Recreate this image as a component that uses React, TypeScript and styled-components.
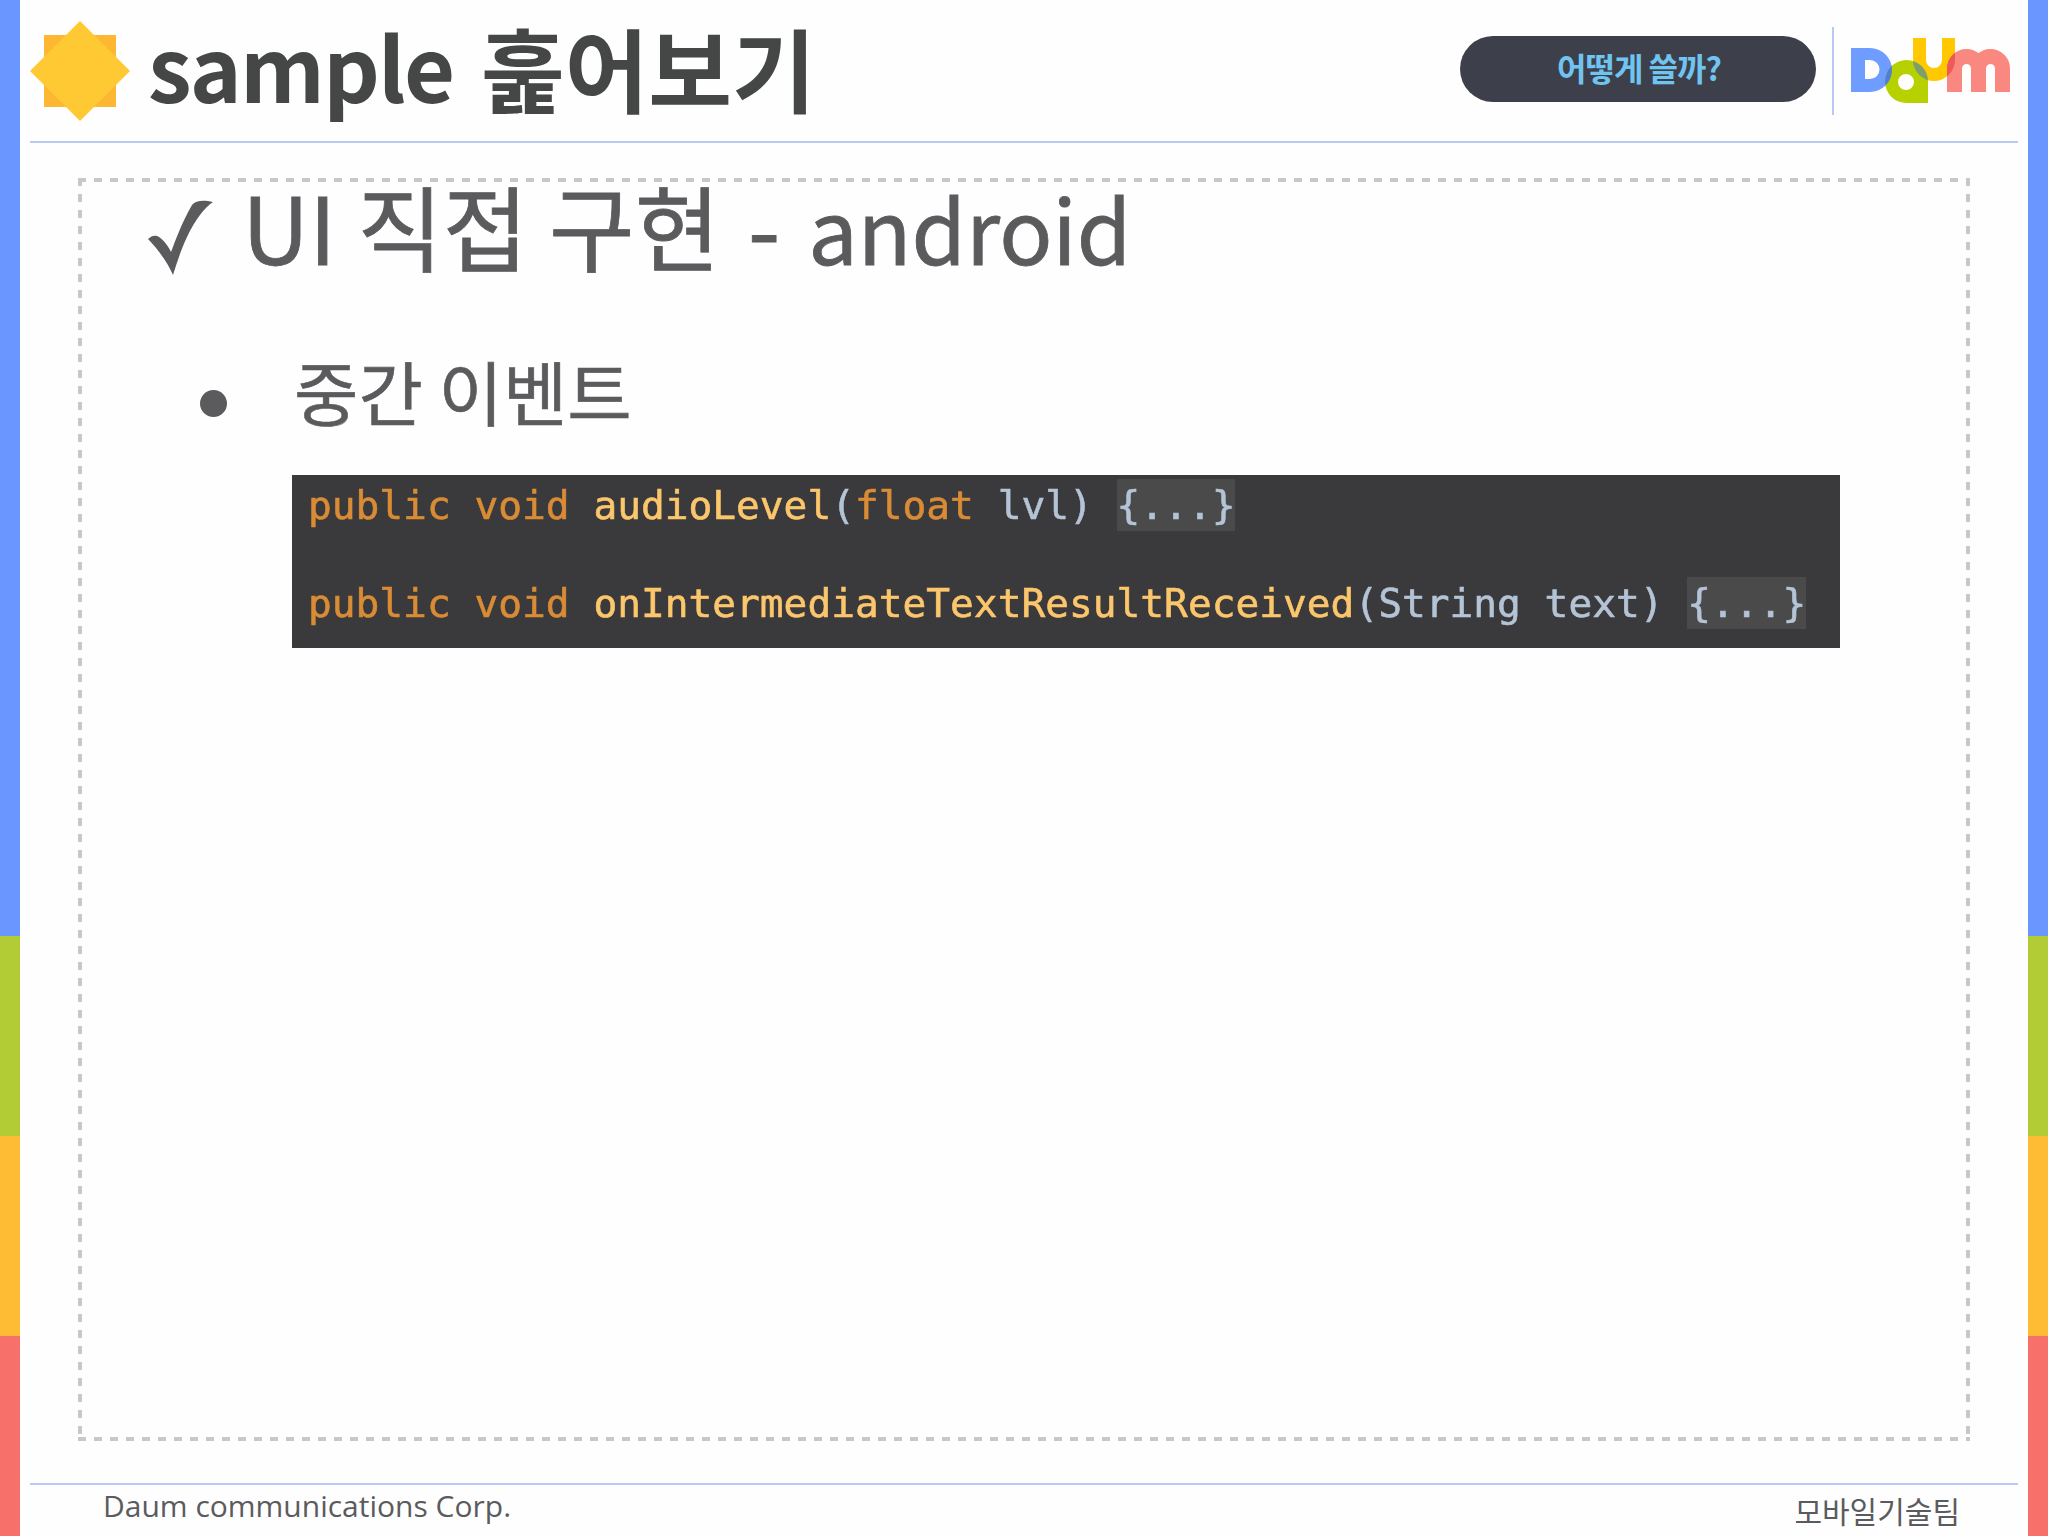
import React from "react";
import styled, { createGlobalStyle } from "styled-components";

const KR = `"Noto Sans CJK KR", "Noto Sans", sans-serif`;
const DASH = "#c8c7c9";

const GlobalStyle = createGlobalStyle`
  html, body {
    margin: 0;
    padding: 0;
    background: #fefefe;
  }
`;

const Slide = styled.div`
  display: grid;
  grid-template-columns: 20px 1fr 20px;
  width: 2048px;
  height: 1536px;
  overflow: hidden;
  font-family: ${KR};
`;

const Strip = styled.div`
  display: flex;
  flex-direction: column;
  height: 100%;
`;

const StripPart = styled.div<{ $color: string; $size: number }>`
  height: ${(p) => p.$size}px;
  background: ${(p) => p.$color};
`;

const Main = styled.main`
  display: flex;
  flex-direction: column;
  padding: 0 10px;
  min-width: 0;
`;

const Header = styled.header`
  display: flex;
  align-items: center;
  height: 141px;
  box-sizing: content-box;
  border-bottom: 2px solid #b8caef;
`;

const Title = styled.h1`
  margin: 0 0 8px 18px;
  font-size: 88px;
  line-height: 1.1;
  font-weight: 700;
  color: #454746;
  white-space: nowrap;
`;

const TitleLatin = styled.span`
  display: inline-block;
  margin-right: 27.5px;
  letter-spacing: -1.75px;
`;

const TitleHangul = styled.span`
  display: inline-block;
  font-size: 91px;
  vertical-align: -3px;
`;

const HelpButton = styled.button`
  margin: 0 0 4px auto;
  width: 356px;
  height: 66px;
  padding: 0 0 4px 2px;
  border: 0;
  border-radius: 33px;
  background: #3d404b;
  color: #6fc4f0;
  font-family: ${KR};
  font-size: 32px;
  font-weight: 700;
  letter-spacing: -1px;
`;

const Divider = styled.div`
  width: 2px;
  height: 88px;
  margin-left: 16px;
  background: #b8caef;
`;

const LogoBox = styled.svg`
  display: block;
  width: 170px;
  height: 75px;
  margin: 0 3px 3px 11px;
`;

const Content = styled.section`
  flex: none;
  box-sizing: border-box;
  height: 1263px;
  margin: 35px 48px 0 48px;
  padding: 3px 66px 0 70px;
  background:
    repeating-linear-gradient(90deg, ${DASH} 0 8px, transparent 8px 16px) top left / 100% 4px no-repeat,
    repeating-linear-gradient(90deg, ${DASH} 0 8px, transparent 8px 16px) bottom left / 100% 4px no-repeat,
    repeating-linear-gradient(180deg, ${DASH} 0 8px, transparent 8px 16px) top left / 4px 100% no-repeat,
    repeating-linear-gradient(180deg, ${DASH} 0 8px, transparent 8px 16px) top right / 4px 100% no-repeat;
`;

const Heading = styled.h2`
  display: flex;
  align-items: flex-start;
  gap: 28px;
  margin: -2px 0 0;
  height: 92px;
  font-size: 93px;
  line-height: 92px;
  font-weight: 400;
  color: #5b5b5e;
  white-space: nowrap;
  -webkit-text-stroke: 0.8px #5b5b5e;
`;

const HeadingDash = styled.span`
  margin: 0 7px;
`;

const HeadingLatin = styled.span`
  font-size: 88px;
`;

const CheckIcon = styled.svg`
  flex: none;
  width: 66px;
  height: 76px;
  margin-top: 21px;
`;

const SubHeading = styled.h3`
  display: flex;
  align-items: center;
  margin: 84px 0 0 49px;
  height: 72px;
  font-size: 70px;
  line-height: 72px;
  font-weight: 400;
  color: #5b5b5e;
  -webkit-text-stroke: 0.6px #5b5b5e;
`;

const Bullet = styled.span`
  flex: none;
  width: 27px;
  height: 27px;
  margin: 24px 67px 0 3px;
  border-radius: 50%;
  background: #5b5b5e;
`;

const CodeBlock = styled.pre`
  box-sizing: border-box;
  width: 1548px;
  height: 173px;
  margin: 48px 0 0 144px;
  padding: 0 0 0 16px;
  background: #3a393b;
  font-family: "DejaVu Sans Mono", "Liberation Mono", monospace;
  font-size: 39.5px;
  line-height: 98px;
  color: #b4c4d6;
  overflow: hidden;
`;

const CodeLine = styled.div`
  height: 98px;
  margin-top: -19px;
  filter: blur(0.7px);
  -webkit-text-stroke: 0.6px currentColor;
  & + & {
    margin-top: 0;
  }
`;

const Keyword = styled.span`
  color: #d98c35;
`;

const Method = styled.span`
  color: #fbc66c;
`;

const Fold = styled.span`
  background: #4a4a4b;
  padding: 3px 0;
`;

const Footer = styled.footer`
  display: flex;
  justify-content: space-between;
  align-items: flex-start;
  margin-top: 42px;
  padding: 0 58px 0 73px;
  border-top: 2px solid #b8caef;
  color: #5b5b5e;
`;

const Company = styled.span`
  font-family: "Open Sans", "Noto Sans", sans-serif;
  font-size: 30px;
  line-height: 41px;
`;

const Team = styled.span`
  font-size: 30px;
  line-height: 50px;
`;

const stripParts = [
  { color: "#6a97ff", size: 936 },
  { color: "#b2cc36", size: 200 },
  { color: "#fdbc34", size: 200 },
  { color: "#f7706a", size: 200 },
];

const SideStrip = () => (
  <Strip>
    {stripParts.map((part) => (
      <StripPart key={part.color} $color={part.color} $size={part.size} />
    ))}
  </Strip>
);

const StarIcon = () => (
  <svg width="100" height="100" viewBox="0 0 100 100" style={{ flex: "none" }}>
    <rect x="14" y="14" width="72" height="72" fill="#fdb733" />
    <polygon points="50,0 100,50 50,100 0,50" fill="#fec933" />
  </svg>
);

const LOGO_D = "M6 16H25A22 22 0 0 1 25 60H6ZM20 28V47H25A9.5 9.5 0 0 0 25 28Z";
const LOGO_U = "M68 6H81V28A8 8 0 0 0 97 28V6H110V28A21 21 0 0 1 68 28Z";
const LOGO_A =
  "M40 49.5A21.5 21.5 0 0 1 83 49.5V71H62A21.5 21.5 0 0 1 40 49.5ZM53 50A8 8 0 0 0 69 50A8 8 0 0 0 53 50Z";
const LOGO_M = "M109.5 60V36.5A12 12 0 0 1 133.5 36.5V60M133.5 36.5A12 12 0 0 1 157.5 36.5V60";

// overlaps of the letters are redrawn clipped, the logo mixes them by hand
const DaumLogo = () => (
  <LogoBox viewBox="0 0 170 75">
    <defs>
      <clipPath id="logo-a">
        <path d={LOGO_A} clipRule="evenodd" />
      </clipPath>
      <clipPath id="logo-u">
        <path d={LOGO_U} />
      </clipPath>
    </defs>
    <path d={LOGO_D} fill="#6e9cff" fillRule="evenodd" />
    <path d={LOGO_U} fill="#ffc800" />
    <path d={LOGO_A} fill="#b6d000" fillRule="evenodd" />
    <path d={LOGO_M} fill="none" stroke="#f98880" strokeWidth="15" />
    <path d={LOGO_D} fill="#4f7fd6" fillRule="evenodd" clipPath="url(#logo-a)" />
    <path d={LOGO_U} fill="#7f9f6a" clipPath="url(#logo-a)" />
    <path d={LOGO_M} fill="none" stroke="#ee5a5a" strokeWidth="15" clipPath="url(#logo-u)" />
  </LogoBox>
);

const CheckMark = () => (
  <CheckIcon viewBox="0 0 66 76">
    <path
      d="M0 39C3 36 6 35 9 36C13 37 20 45 23 52C27 42 33 24 44 5C48 0 56 0 65 2C57 7 47 20 39 37C33 50 29 62 25 75C20 63 9 48 0 39Z"
      fill="#5b5b5e"
    />
  </CheckIcon>
);

export default function App() {
  return (
    <>
      <GlobalStyle />
      <Slide>
        <SideStrip />
        <Main>
          <Header>
            <StarIcon />
            <Title>
              <TitleLatin>sample</TitleLatin>
              <TitleHangul>훑어보기</TitleHangul>
            </Title>
            <HelpButton>어떻게 쓸까?</HelpButton>
            <Divider />
            <DaumLogo />
          </Header>
          <Content>
            <Heading>
              <CheckMark />
              <span>
                UI 직접 구현 <HeadingDash>-</HeadingDash> <HeadingLatin>android</HeadingLatin>
              </span>
            </Heading>
            <SubHeading>
              <Bullet />
              중간 이벤트
            </SubHeading>
            <CodeBlock>
              <CodeLine>
                <Keyword>public void </Keyword>
                <Method>audioLevel</Method>(<Keyword>float </Keyword>lvl) <Fold>{"{...}"}</Fold>
              </CodeLine>
              <CodeLine>
                <Keyword>public void </Keyword>
                <Method>onIntermediateTextResultReceived</Method>(String text) <Fold>{"{...}"}</Fold>
              </CodeLine>
            </CodeBlock>
          </Content>
          <Footer>
            <Company>Daum communications Corp.</Company>
            <Team>모바일기술팀</Team>
          </Footer>
        </Main>
        <SideStrip />
      </Slide>
    </>
  );
}
